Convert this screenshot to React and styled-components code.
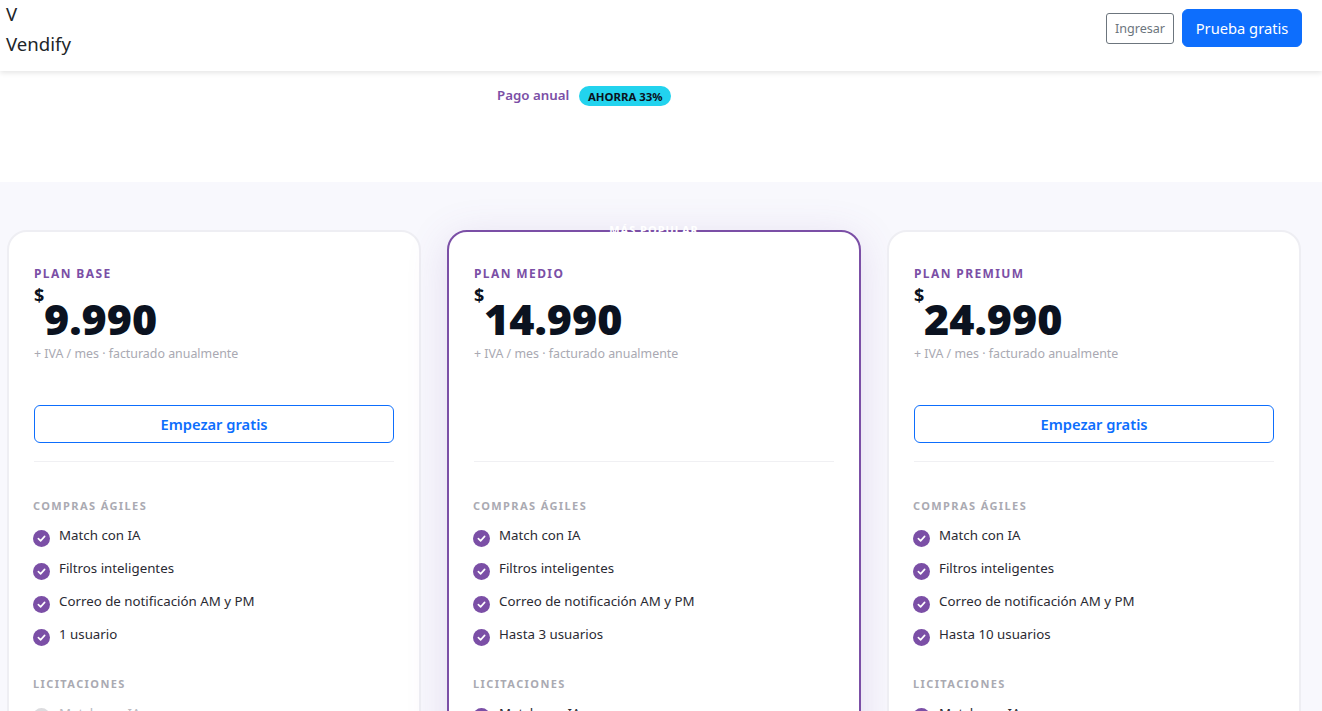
import React from 'react'
import styled, { createGlobalStyle } from 'styled-components'

const PURPLE = '#7b4fa6'

const GlobalStyle = createGlobalStyle`
  * { box-sizing: border-box; }
  html, body { margin: 0; padding: 0; background: #fff; overflow-x: hidden; }
  body {
    font-family: "Noto Sans", "Open Sans", "Liberation Sans", sans-serif;
    color: #212529;
  }
`

const Navbar = styled.header`
  height: 71px;
  padding: 9px 20px 0 6px;
  display: flex;
  justify-content: space-between;
  align-items: flex-start;
  background: #fff;
  box-shadow: 0 2px 5px rgba(0, 0, 0, 0.1);
`

const Brand = styled.div`
  font-size: 18.6px;
  line-height: 30px;
  color: #212529;
  margin-top: -10px;
`

const NavActions = styled.div`
  display: flex;
  align-items: center;
  gap: 8px;
`

const LoginButton = styled.button`
  width: 68px;
  height: 31px;
  padding: 0;
  font: inherit;
  font-size: 12.6px;
  color: #6c757d;
  background: #fff;
  border: 1px solid #6c757d;
  border-radius: 3px;
`

const TrialButton = styled.button`
  width: 120px;
  height: 38px;
  padding: 0;
  font: inherit;
  font-size: 14.7px;
  color: #fff;
  background: #0d6efd;
  border: 1px solid #0d6efd;
  border-radius: 6px;
`

const BillingRow = styled.div`
  height: 111px;
  padding: 15px 0 0 497px;
  display: flex;
  align-items: flex-start;
  gap: 10px;
`

const BillingLabel = styled.span`
  font-size: 13.3px;
  line-height: 18px;
  font-weight: 600;
  color: ${PURPLE};
`

const SaveBadge = styled.span`
  height: 20px;
  width: 92px;
  display: flex;
  align-items: center;
  justify-content: center;
  border-radius: 10px;
  background: #22d3ee;
  color: #0b1220;
  font-size: 11.4px;
  font-weight: 700;
`

const PlansSection = styled.section`
  background: #f8f8fd;
  padding: 48px 21px 40px 7px;
`

const PlansGrid = styled.div`
  display: grid;
  grid-template-columns: repeat(3, 414px);
  column-gap: 26px;
`

const PlanCard = styled.article`
  position: relative;
  padding: 34px 25px 32px;
  background: #fff;
  border: 2px solid ${p => (p.$featured ? PURPLE : '#eeeef3')};
  border-radius: 20px;
  box-shadow: ${p => (p.$featured ? '0 8px 40px rgba(123, 79, 166, 0.17)' : 'none')};
`

const PopularTag = styled.span`
  position: absolute;
  top: -10px;
  left: 50%;
  transform: translateX(-50%);
  padding: 0 2px;
  color: #fff;
  font-size: 11px;
  line-height: 16px;
  font-weight: 700;
  letter-spacing: 1px;
  white-space: nowrap;
`

const PlanName = styled.div`
  font-size: 12px;
  line-height: 16px;
  font-weight: 700;
  letter-spacing: 1.4px;
  color: ${PURPLE};
`

const PriceRow = styled.div`
  display: flex;
  align-items: flex-start;
  height: 53px;
  margin-top: 3px;
`

const Currency = styled.span`
  font-size: 18px;
  line-height: 20px;
  font-weight: 700;
  color: #0b1220;
  width: 10px;
`

const Amount = styled.span`
  font-size: 43px;
  line-height: 48px;
  font-weight: 900;
  color: #0b1220;
  margin-top: 10px;
`

const PriceNote = styled.div`
  margin-top: 8px;
  font-size: 12.4px;
  line-height: 16px;
  color: #a9a9b2;
`

const ButtonSlot = styled.div`
  height: 38px;
  margin-top: 43px;
`

const StartButton = styled.button`
  width: 100%;
  height: 38px;
  padding: 0;
  font: inherit;
  font-size: 14.7px;
  font-weight: 600;
  color: #0d6efd;
  background: #fff;
  border: 1px solid #0d6efd;
  border-radius: 6px;
`

const Divider = styled.hr`
  margin: 18px 0 36px;
  border: 0;
  border-top: 1px solid #f0f0f3;
`

const GroupTitle = styled.h3`
  margin: 0 0 12px -1px;
  font-size: 11px;
  line-height: 16px;
  font-weight: 700;
  letter-spacing: 1.4px;
  color: #aaaab2;
`

const FeatureList = styled.ul`
  list-style: none;
  margin: 0 0 31px;
  padding: 0;
  display: flex;
  flex-direction: column;
  gap: 13px;
`

const FeatureItem = styled.li`
  display: flex;
  align-items: flex-start;
  gap: 9px;
  height: 20px;
  margin-left: -1px;
  font-size: 13.3px;
  line-height: 18px;
  color: ${p => (p.$off ? '#b9b9c0' : '#2a2a33')};
`

const CheckDot = styled.span`
  flex: none;
  width: 17px;
  height: 17px;
  margin-top: 4px;
  border-radius: 50%;
  background: ${p => (p.$off ? '#dcdcdf' : PURPLE)};
  display: flex;
  align-items: center;
  justify-content: center;
`

function CheckIcon() {
  return (
    <svg width="9" height="9" viewBox="0 0 10 10" fill="none">
      <path d="M1.5 5.2 L4 7.6 L8.5 2.6" stroke="#fff" strokeWidth="1.8" strokeLinecap="round" strokeLinejoin="round" />
    </svg>
  )
}

const plans = [
  { name: 'PLAN BASE', price: '9.990', users: '1 usuario', button: true, licit: false },
  { name: 'PLAN MEDIO', price: '14.990', users: 'Hasta 3 usuarios', button: false, featured: true, licit: true },
  { name: 'PLAN PREMIUM', price: '24.990', users: 'Hasta 10 usuarios', button: true, licit: true },
]

function Feature({ off, children }) {
  return (
    <FeatureItem $off={off}>
      <CheckDot $off={off}>{!off && <CheckIcon />}</CheckDot>
      {children}
    </FeatureItem>
  )
}

function Plan({ plan }) {
  return (
    <PlanCard $featured={plan.featured}>
      {plan.featured && <PopularTag>MÁS POPULAR</PopularTag>}
      <PlanName>{plan.name}</PlanName>
      <PriceRow>
        <Currency>$</Currency>
        <Amount>{plan.price}</Amount>
      </PriceRow>
      <PriceNote>+ IVA / mes · facturado anualmente</PriceNote>
      <ButtonSlot>{plan.button && <StartButton>Empezar gratis</StartButton>}</ButtonSlot>
      <Divider />
      <GroupTitle>COMPRAS ÁGILES</GroupTitle>
      <FeatureList>
        <Feature>Match con IA</Feature>
        <Feature>Filtros inteligentes</Feature>
        <Feature>Correo de notificación AM y PM</Feature>
        <Feature>{plan.users}</Feature>
      </FeatureList>
      <GroupTitle>LICITACIONES</GroupTitle>
      <FeatureList>
        <Feature off={!plan.licit}>Match con IA</Feature>
      </FeatureList>
    </PlanCard>
  )
}

export default function App() {
  return (
    <>
      <GlobalStyle />
      <Navbar>
        <Brand>
          <div>V</div>
          <div>Vendify</div>
        </Brand>
        <NavActions>
          <LoginButton>Ingresar</LoginButton>
          <TrialButton>Prueba gratis</TrialButton>
        </NavActions>
      </Navbar>
      <BillingRow>
        <BillingLabel>Pago anual</BillingLabel>
        <SaveBadge>AHORRA 33%</SaveBadge>
      </BillingRow>
      <PlansSection>
        <PlansGrid>
          {plans.map(plan => (
            <Plan key={plan.name} plan={plan} />
          ))}
        </PlansGrid>
      </PlansSection>
    </>
  )
}
